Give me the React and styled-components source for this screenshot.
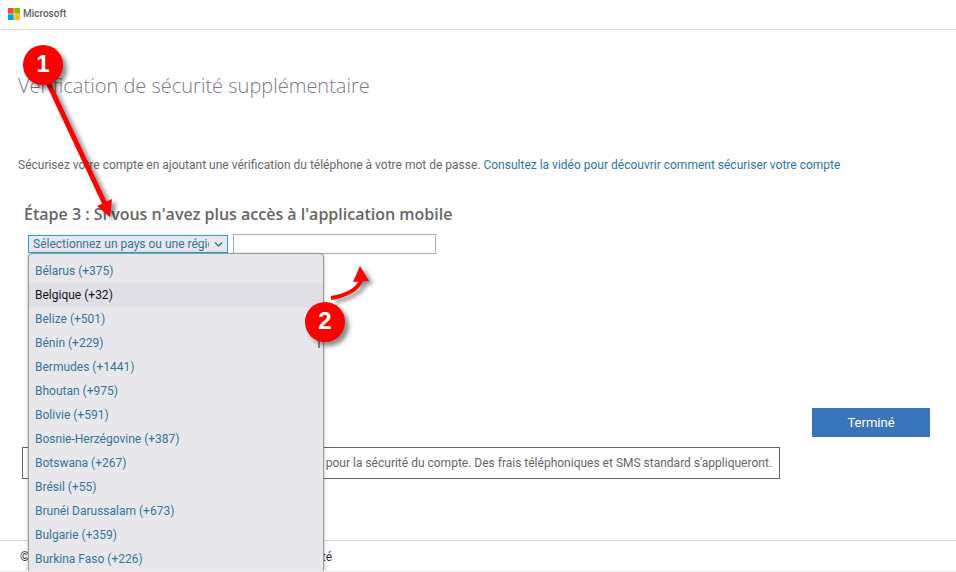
import React from 'react';
import styled, { createGlobalStyle, ThemeProvider } from 'styled-components';

const theme = {
  text: '#666666',
  title: '#777b82',
  link: '#2b74a8',
  option: '#34759b',
  line: '#dcdcdc',
  menu: '#e8e8ec',
  menuActive: '#e0dfe6',
  primary: '#3a75bc',
  mark: '#ff0000',
};

const GlobalStyle = createGlobalStyle`
  * {
    box-sizing: border-box;
  }
  body {
    margin: 0;
    background: #fff;
    font-family: Roboto, 'Open Sans', sans-serif;
    font-size: 12px;
    line-height: 16px;
  }
`;

const Page = styled.div`
  position: relative;
  display: flex;
  flex-direction: column;
  min-height: 100vh;
  max-height: 100vh;
  overflow: hidden;
  color: ${({ theme }) => theme.text};
  border-bottom: 1px solid #ececec;
`;

const Header = styled.header`
  display: flex;
  align-items: center;
  gap: 3px;
  height: 30px;
  padding: 0 8px 2px;
  border-bottom: 1px solid ${({ theme }) => theme.line};
`;

const Brand = styled.span`
  font-size: 10px;
  font-weight: 500;
  line-height: 12px;
  color: #606060;
`;

const Main = styled.main`
  flex: 1;
  padding: 40px 26px 0 18px;
`;

const Title = styled.h1`
  margin: 0;
  font-family: 'Open Sans', sans-serif;
  font-size: 20px;
  font-weight: 300;
  line-height: 32px;
  color: ${({ theme }) => theme.title};
`;

const Intro = styled.p`
  margin: 54px 0 0;
  line-height: 18px;
`;

const Link = styled.a`
  color: ${({ theme }) => theme.link};
  text-decoration: none;
`;

const Step = styled.h2`
  margin: 28px 0 0;
  padding-left: 6px;
  font-family: 'Open Sans', sans-serif;
  font-size: 16px;
  font-weight: 600;
  line-height: 24px;
`;

const Fields = styled.div`
  display: flex;
  align-items: center;
  gap: 5px;
  margin-top: 8px;
  padding-left: 10px;
`;

const SelectBox = styled.div`
  position: relative;
  width: 200px;
`;

const CountrySelect = styled.select`
  display: block;
  width: 100%;
  height: 18px;
  padding: 0 18px 0 4px;
  appearance: none;
  border: 1px solid #1ba5dc;
  border-radius: 0;
  outline: none;
  background: ${({ theme }) => theme.menu};
  color: ${({ theme }) => theme.option};
  font: inherit;
`;

const Chevron = styled.svg`
  position: absolute;
  top: 6px;
  right: 5px;
  width: 9px;
  height: 7px;
  pointer-events: none;
`;

const Menu = styled.ul`
  position: absolute;
  top: 100%;
  left: 0;
  z-index: 1;
  width: 296px;
  margin: 0;
  padding: 5px 0;
  list-style: none;
  background: ${({ theme }) => theme.menu};
  border: 1px solid #98989c;
  border-radius: 4px;
  box-shadow: 0 1px 4px rgba(0, 0, 0, 0.25);
`;

const Option = styled.li`
  padding: 0 6px;
  line-height: 24px;
  color: ${({ theme, $active }) => ($active ? '#15141a' : theme.option)};
  background: ${({ theme, $active }) => ($active ? theme.menuActive : 'transparent')};
`;

const Thumb = styled.li`
  position: absolute;
  top: 64px;
  right: 3px;
  width: 2px;
  height: 30px;
  background: #88888c;
`;

const PhoneInput = styled.input`
  width: 203px;
  height: 20px;
  padding: 0 4px;
  border: 1px solid #9db0c2;
  border-radius: 0;
  outline: none;
  background: #fff;
  font: inherit;
`;

const Actions = styled.div`
  display: flex;
  justify-content: flex-end;
  margin-top: 154px;
`;

const DoneButton = styled.button`
  width: 118px;
  height: 29px;
  padding: 0;
  border: none;
  background: ${({ theme }) => theme.primary};
  color: #fff;
  font: inherit;
  font-size: 13px;
  cursor: pointer;
`;

const Notice = styled.p`
  margin: 10px 150px 0 4px;
  padding: 7px;
  border: 1px solid #666;
  text-align: right;
`;

const Footer = styled.footer`
  height: 31px;
  padding: 8px 0 0 20px;
  border-top: 1px solid ${({ theme }) => theme.line};
  color: #333;
`;

const FooterLinks = styled.div`
  display: flex;
  justify-content: space-between;
  width: 312px;

  a {
    color: inherit;
    text-decoration: none;
  }
`;

const Marks = styled.div`
  position: absolute;
  top: 0;
  left: 0;
  z-index: 2;
  pointer-events: none;
`;

const Arrows = styled.svg`
  display: block;
  filter: drop-shadow(4px 3px 2px rgba(0, 0, 0, 0.45));
`;

const Badge = styled.span`
  position: absolute;
  top: ${({ $top }) => $top}px;
  left: ${({ $left }) => $left}px;
  width: 40px;
  height: 40px;
  border-radius: 50%;
  background: ${({ theme }) => theme.mark};
  box-shadow: 4px 4px 4px rgba(0, 0, 0, 0.45);
  color: #fff;
  font-family: 'Liberation Sans', Arial, sans-serif;
  font-size: 24px;
  font-weight: 700;
  line-height: 38px;
  text-align: center;
`;

const countries = [
  ['Bélarus', '375'],
  ['Belgique', '32'],
  ['Belize', '501'],
  ['Bénin', '229'],
  ['Bermudes', '1441'],
  ['Bhoutan', '975'],
  ['Bolivie', '591'],
  ['Bosnie-Herzégovine', '387'],
  ['Botswana', '267'],
  ['Brésil', '55'],
  ['Brunéi Darussalam', '673'],
  ['Bulgarie', '359'],
  ['Burkina Faso', '226'],
];

const Logo = () => (
  <svg width='12' height='12' viewBox='0 0 12 12' aria-hidden='true'>
    <rect width='5.7' height='5.7' fill='#f25022' />
    <rect x='6.3' width='5.7' height='5.7' fill='#7fba00' />
    <rect y='6.3' width='5.7' height='5.7' fill='#00a4ef' />
    <rect x='6.3' y='6.3' width='5.7' height='5.7' fill='#ffb900' />
  </svg>
);

const CountryPicker = () => (
  <SelectBox>
    <CountrySelect aria-label='Pays ou région'>
      <option>Sélectionnez un pays ou une région</option>
    </CountrySelect>
    <Chevron viewBox='0 0 9 7' aria-hidden='true'>
      <path d='M1 1.5 4.5 5 8 1.5' fill='none' stroke='#34759b' strokeWidth='1.5' />
    </Chevron>
    <Menu role='listbox' aria-label='Pays ou région'>
      {countries.map(([name, code]) => (
        <Option
          key={name}
          role='option'
          aria-selected={name === 'Belgique'}
          $active={name === 'Belgique'}
        >
          {name} (+{code})
        </Option>
      ))}
      <Thumb role='presentation' />
    </Menu>
  </SelectBox>
);

const App = () => {
  return (
    <ThemeProvider theme={theme}>
      <GlobalStyle />
      <Page>
        <Header>
          <Logo />
          <Brand>Microsoft</Brand>
        </Header>
        <Main>
          <Title>Vérification de sécurité supplémentaire</Title>
          <Intro>
            Sécurisez votre compte en ajoutant une vérification du téléphone à votre mot de passe.{' '}
            <Link href='#video'>Consultez la vidéo pour découvrir comment sécuriser votre compte</Link>
          </Intro>
          <Step>Étape 3 : Si vous n'avez plus accès à l'application mobile</Step>
          <Fields>
            <CountryPicker />
            <PhoneInput type='tel' aria-label='Numéro de téléphone' />
          </Fields>
          <Actions>
            <DoneButton type='button'>Terminé</DoneButton>
          </Actions>
          <Notice>
            pour la sécurité du compte. Des frais téléphoniques et SMS standard s'appliqueront.
          </Notice>
        </Main>
        <Footer>
          <FooterLinks>
            <span>©</span>
            <a href='#confidentialite'>Confidentialité</a>
          </FooterLinks>
        </Footer>
        <Marks>
          <Arrows width='400' height='360' viewBox='0 0 400 360' aria-hidden='true'>
            <path d='M46 78 105 204' stroke='#f00' strokeWidth='5' />
            <path d='M97 206 112 199 110 217Z' fill='#f00' />
            <path d='M331 298Q355 294 361 281' fill='none' stroke='#f00' strokeWidth='4' />
            <path d='M353 282 360 266 369 281Z' fill='#f00' />
          </Arrows>
          <Badge $top={45} $left={23}>1</Badge>
          <Badge $top={302} $left={305}>2</Badge>
        </Marks>
      </Page>
    </ThemeProvider>
  );
};

export default App;
